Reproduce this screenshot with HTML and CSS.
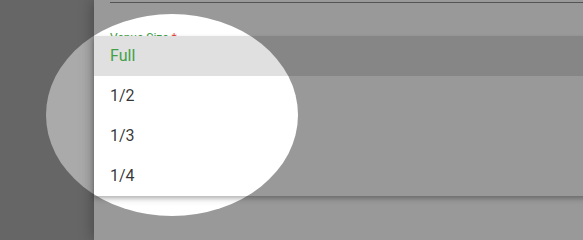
FILE: index.html
```html
<!DOCTYPE html>
<html lang="en">
<head>
<meta charset="utf-8">
<link rel="stylesheet" href="styles.css">
</head>
<body>
<div class="app">
  <aside class="sidebar"></aside>
  <main class="panel">
    <div class="field-prev"></div>
    <div class="field">
      <label class="label">Venue Size <span class="req">*</span></label>
    </div>
    <ul class="menu">
      <li class="item selected">Full</li>
      <li class="item">1/2</li>
      <li class="item">1/3</li>
      <li class="item">1/4</li>
    </ul>
  </main>
  <div class="spotlight"></div>
</div>
</body>
</html>
```
FILE: styles.css
```css
html, body {
  margin: 0;
  padding: 0;
  height: 100%;
  overflow: hidden;
}
body {
  font-family: Roboto, "Liberation Sans", sans-serif;
  background: #aaa;
}
.app {
  position: relative;
  display: flex;
  height: 240px;
  width: 583px;
  overflow: hidden;
}
.sidebar {
  width: 94px;
  flex: none;
  background: #aaa;
}
.panel {
  position: relative;
  flex: 1;
  background: #fff;
  box-shadow: 0 0 14px rgba(0,0,0,0.35);
  padding-left: 16px;
}
.field-prev {
  height: 2px;
  border-bottom: 1px solid rgba(0,0,0,0.45);
}
.field {
  padding-top: 28px;
}
.label {
  display: block;
  font-size: 12px;
  line-height: 14px;
  color: #43a047;
}
.req {
  color: #e53935;
}
.menu {
  position: absolute;
  left: 0;
  right: -20px;
  top: 36px;
  margin: 0;
  padding: 0;
  list-style: none;
  background: #fff;
  box-shadow: 0 2px 4px rgba(0,0,0,0.2), 0 4px 6px rgba(0,0,0,0.12);
}
.item {
  height: 40px;
  line-height: 40px;
  padding-left: 16px;
  font-size: 16px;
  color: rgba(0,0,0,0.8);
}
.item.selected {
  background: #e0e0e0;
  color: #43a047;
}
.spotlight {
  position: absolute;
  left: 46px;
  top: 14px;
  width: 252px;
  height: 202px;
  border-radius: 50%;
  box-shadow: 0 0 0 1000px rgba(0,0,0,0.4);
  pointer-events: none;
  z-index: 10;
}
```
